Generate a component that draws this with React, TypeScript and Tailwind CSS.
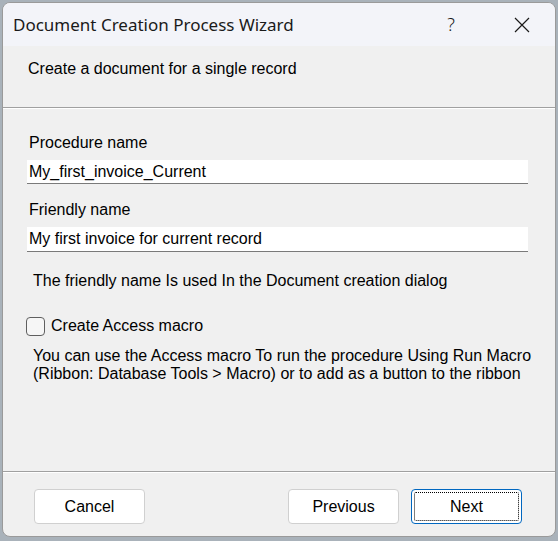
import React from 'react';

const arial = { fontFamily: '"Liberation Sans", Arial, sans-serif' };

function WizardButton({ label, focused }: { label: string; focused?: boolean }) {
  return (
    <button
      className={`relative w-[111px] h-[35px] bg-white rounded-[4px] border text-[16px] text-black ${
        focused ? 'border-[#0067c0]' : 'border-[#d0d0d0]'
      }`}
      style={arial}
    >
      {focused && <span className="absolute inset-[2px] border border-dotted border-black rounded-[2px]" />}
      {label}
    </button>
  );
}

export default function App() {
  return (
    <div className="w-[558px] h-[541px] bg-[#a9b2ba] pt-[2px] pl-[2px] overflow-hidden">
      <div className="w-[554px] h-[535px] flex flex-col bg-[#f0f0f0] border border-[#9a9a9a] rounded-[8px] overflow-hidden">
        {/* Title bar */}
        <div
          className="h-[43px] shrink-0 flex items-center bg-[#f3f4f9] text-[#1a1a1a]"
          style={{ fontFamily: '"Noto Sans", "Open Sans", sans-serif' }}
        >
          <span className="pl-[10px] text-[17px] flex-1">Document Creation Process Wizard</span>
          <span className="w-[20px] text-center text-[18px] font-light mr-[53px]">?</span>
          <svg width="16" height="16" viewBox="0 0 16 16" className="mr-[25px]">
            <path d="M1 1 L15 15 M15 1 L1 15" stroke="#1a1a1a" strokeWidth="1.2" fill="none" />
          </svg>
        </div>

        {/* Header */}
        <div className="h-[61px] shrink-0 pt-[14px] pl-[25px] text-[16px] leading-[18px] text-black" style={arial}>
          Create a document for a single record
        </div>
        <div className="h-px bg-[#a0a0a0]" />
        <div className="h-px bg-white" />

        {/* Body */}
        <div className="flex-1 flex flex-col text-[16px] text-black" style={arial}>
          <div className="mt-[25px] ml-[26px] leading-[18px]">Procedure name</div>
          <div className="mt-[8px] ml-[24px] w-[501px] h-[24px] bg-white border-b border-[#7a7a7a] flex items-center pl-[2px]">
            My_first_invoice_Current
          </div>
          <div className="mt-[17px] ml-[26px] leading-[18px]">Friendly name</div>
          <div className="mt-[8px] ml-[24px] w-[501px] h-[25px] bg-white border-b border-[#7a7a7a] flex items-center pl-[2px]">
            My first invoice for current record
          </div>
          <div className="mt-[20px] ml-[30px] leading-[18px]">
            The friendly name Is used In the Document creation dialog
          </div>
          <div className="mt-[26px] ml-[23px] flex items-center h-[20px]">
            <span className="w-[19px] h-[19px] rounded-[4px] border border-[#5f5f5f] bg-[#f6f6f6]" />
            <span className="ml-[6px]">Create Access macro</span>
          </div>
          <div className="mt-[11px] ml-[30px] leading-[18px]">
            You can use the Access macro To run the procedure Using Run Macro
            <br />
            (Ribbon: Database Tools &gt; Macro) or to add as a button to the ribbon
          </div>
        </div>

        {/* Footer */}
        <div className="h-px bg-[#a0a0a0]" />
        <div className="h-px bg-white" />
        <div className="h-[63px] shrink-0 flex items-start pt-[16px] pl-[31px] pr-[33px]">
          <WizardButton label="Cancel" />
          <div className="flex-1" />
          <WizardButton label="Previous" />
          <div className="w-[12px]" />
          <WizardButton label="Next" focused />
        </div>
      </div>
    </div>
  );
}
